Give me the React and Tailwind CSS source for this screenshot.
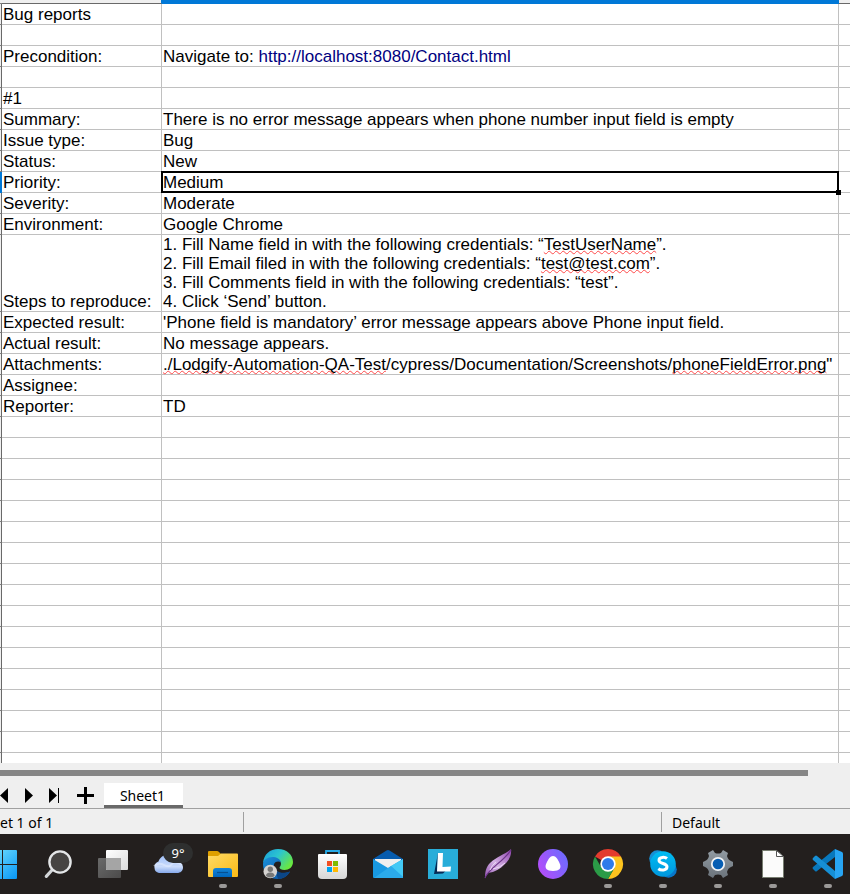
import React from "react";

const wavy =
  "underline decoration-wavy decoration-1 decoration-[#ff4a4a] underline-offset-0 [text-decoration-skip-ink:none]";

function Typo({ children }) {
  return <span className={wavy}>{children}</span>;
}

const rows = [
  ["Bug reports", ""],
  ["", ""],
  [
    "Precondition:",
    <>
      Navigate to:{" "}
      <a href="http://localhost:8080/Contact.html" className="text-[#000080]">
        http://localhost:8080/Contact.html
      </a>
    </>,
  ],
  ["", ""],
  ["#1", ""],
  ["Summary:", "There is no error message appears when phone number input field is empty"],
  ["Issue type:", "Bug"],
  ["Status:", "New"],
  ["Priority:", "Medium"],
  ["Severity:", "Moderate"],
  ["Environment:", "Google Chrome"],
  [
    "Steps to reproduce:",
    <>
      1. Fill Name field in with the following credentials: “<Typo>TestUserName</Typo>”.
      <br />
      2. Fill Email filed in with the following credentials: “<Typo>test@test.com</Typo>”.
      <br />
      3. Fill Comments field in with the following credentials: “test”.
      <br />
      4. Click ‘Send’ button.
    </>,
  ],
  ["Expected result:", "'Phone field is mandatory’ error message appears above Phone input field."],
  ["Actual result:", "No message appears."],
  [
    "Attachments:",
    <>
      <Typo>./Lodgify-Automation-QA-Test</Typo>/cypress/Documentation/Screenshots/
      <Typo>phoneFieldError.png</Typo>"
    </>,
  ],
  ["Assignee:", ""],
  ["Reporter:", "TD"],
  ...Array.from({ length: 17 }, () => ["", ""]),
];

const SELECTED = 8;
const cell = "h-[21px] border-r border-b border-[#c0c0c0] px-px py-0 align-bottom whitespace-nowrap";

function Sheet() {
  return (
    <table className="w-full table-fixed border-separate border-spacing-0 text-[17px] leading-[19px] text-black">
      <colgroup>
        <col className="w-[2px]" />
        <col className="w-[160px]" />
        <col className="w-[677px]" />
        <col />
      </colgroup>
      <thead>
        <tr className="h-1">
          <th className="border-b border-[#808080] bg-[#efefef] p-0" />
          <th className="border-r border-b border-r-[#0078d7] border-b-[#696969] bg-[#efefef] p-0" />
          <th className="bg-[#0078d7] p-0" />
          <th className="border-b border-[#696969] bg-[#efefef] p-0" />
        </tr>
      </thead>
      <tbody>
        {rows.map(([label, value], i) => (
          <tr key={i}>
            <th
              className={
                i === SELECTED
                  ? "bg-[#0078d7] p-0"
                  : "border-r border-b border-r-[#696969] border-b-[#808080] bg-[#efefef] p-0"
              }
            />
            <td className={cell}>{label}</td>
            <td className={i === SELECTED ? cell + " relative" : cell}>
              {value}
              {i === SELECTED && (
                <span className="absolute -inset-px border-2 border-black">
                  <span className="absolute -right-1 -bottom-1 size-[5px] bg-black" />
                </span>
              )}
            </td>
            <td className="border-b border-[#c0c0c0] p-0" />
          </tr>
        ))}
      </tbody>
    </table>
  );
}

function SheetTabs() {
  return (
    <div className="flex h-[33px] items-end border-b border-[#a0a0a0]">
      <div className="flex h-[26px] w-[104px] shrink-0 items-center">
        <button aria-label="Previous sheet" className="w-[25px]">
          <svg width="9" height="16" viewBox="0 0 9 16"><path d="M8 1v15L0 8.500z" /></svg>
        </button>
        <button aria-label="Next sheet" className="w-6">
          <svg width="9" height="16" viewBox="0 0 9 16"><path d="M0 1v15l8-7.500z" /></svg>
        </button>
        <button aria-label="Last sheet" className="w-7">
          <svg width="11" height="16" viewBox="0 0 11 16"><path d="M0 1v15l8-7.500zM9 1h1v15H9z" /></svg>
        </button>
        <button aria-label="Add sheet" className="w-[18px]">
          <svg width="18" height="18" viewBox="0 0 18 18"><path d="M7 1h3v7h7v3h-7v7H7v-7H0V8h7z" /></svg>
        </button>
      </div>
      <button className="h-[25px] w-[79px] border-b-[3px] border-[#696969] bg-white pt-1 pr-[2px] text-[14px] leading-[18px]">
        Sheet1
      </button>
    </div>
  );
}

function StatusBar() {
  return (
    <div className="flex h-[25px] items-center text-[14px]">
      <div className="w-[243px] shrink-0 pt-px">et 1 of 1</div>
      <div className="h-5 flex-1 border-x border-[#a0a0a0]" />
      <div className="w-[188px] shrink-0 pt-px pl-[10px]">Default</div>
    </div>
  );
}

function Icon({ children }) {
  return (
    <svg width="30" height="30" viewBox="0 0 30 30" className="block overflow-visible" aria-hidden="true">
      {children}
    </svg>
  );
}

const apps = [
  {
    name: "Start",
    icon: (
      <Icon>
        <defs>
          <linearGradient id="win" gradientUnits="userSpaceOnUse" x1="0" y1="1" x2="29" y2="30">
            <stop stopColor="#7ce6ff" /><stop offset="1" stopColor="#0796f5" />
          </linearGradient>
        </defs>
        <path fill="url(#win)" d="M0 2q0-1 1-1h13v14H0zM15 1h13q1 0 1 1v13H15zM0 16h14v14H1q-1 0-1-1zM15 16h14v13q0 1-1 1H15z" />
      </Icon>
    ),
  },
  {
    name: "Search",
    icon: (
      <Icon>
        <path d="M9.500 20.500 3.300 27.300" stroke="#d2d5d8" strokeWidth="3.200" strokeLinecap="round" />
        <circle cx="17" cy="13" r="10.600" fill="#464443" stroke="#e4e6e8" strokeWidth="2.400" />
      </Icon>
    ),
  },
  {
    name: "Task view",
    icon: (
      <Icon>
        <defs>
          <linearGradient id="tv" x1="0" y1="0" x2="1" y2="1"><stop stopColor="#fff" /><stop offset="1" stopColor="#dcdcdc" /></linearGradient>
          <linearGradient id="tg" x1="0" y1="0" x2="1" y2="1"><stop stopColor="#6a6a6a" /><stop offset="1" stopColor="#4b4a4a" /></linearGradient>
        </defs>
        <rect y="9" width="23" height="20" rx="1" fill="url(#tg)" />
        <rect x="8" y="1" width="22" height="20" rx="1" fill="url(#tv)" />
        <path d="M8 9h15v12H9q-1 0-1-1z" fill="#a5a5a5" />
      </Icon>
    ),
  },
  {
    name: "Weather",
    badge: "9°",
    icon: (
      <Icon>
        <defs>
          <linearGradient id="cl" x1="0" y1="0" x2="0" y2="1"><stop stopColor="#9fc0fb" /><stop offset=".65" stopColor="#cbdcfb" /><stop offset="1" stopColor="#86a9eb" /></linearGradient>
        </defs>
        <path d="M6 24a6 6 0 0 1-.5-11.500C7 8.500 10 6 14 6c5 0 8 3 9 6.500 4 0 7 2.500 7 6 0 3.300-2.500 5.500-6 5.500z" fill="url(#cl)" />
        <path d="M1 17q5-4 10-1t8-1 10 1" fill="none" stroke="#e3edff" strokeWidth="2" opacity=".55" />
      </Icon>
    ),
  },
  {
    name: "File Explorer",
    open: true,
    icon: (
      <Icon>
        <defs>
          <linearGradient id="fo" x1="0" y1="0" x2="1" y2="1"><stop stopColor="#ffdb67" /><stop offset="1" stopColor="#fbb915" /></linearGradient>
          <linearGradient id="fb" x1="0" y1="0" x2="0" y2="1"><stop stopColor="#1585d8" /><stop offset="1" stopColor="#0066bd" /></linearGradient>
        </defs>
        <path d="M0 3q0-1 1-1h8q1 0 2 1l2 2v6H0z" fill="#dfa000" />
        <path d="M0 7h10l3-2.500h16q1 0 1 1V27q0 1-1 1H1q-1 0-1-1z" fill="url(#fo)" />
        <path d="M5 28v-6q0-3 3-3h13q3 0 3 3v6z" fill="url(#fb)" />
        <path d="M9 23.500h11" stroke="#064f91" strokeWidth="1.200" />
      </Icon>
    ),
  },
  {
    name: "Microsoft Edge",
    open: true,
    icon: (
      <Icon>
        <defs>
          <linearGradient id="e1" x1="0" y1="0" x2="1" y2=".6"><stop stopColor="#189bdd" /><stop offset=".5" stopColor="#2cc5cf" /><stop offset="1" stopColor="#69e841" /></linearGradient>
          <linearGradient id="e2" x1="0" y1="0" x2="1" y2="1"><stop stopColor="#1a91dc" /><stop offset="1" stopColor="#0b4f9f" /></linearGradient>
        </defs>
        <path d="M0 14C1 5 7 0 15 0c9 0 15 6 15 13 0 5-4 8-8.500 8-3 0-5-1-5-2.200 0-1 1.500-1.500 1.500-4 0-3-3-5.800-7.500-5.800C5 9 1 12 0 14z" fill="url(#e1)" />
        <path d="M0 15c0-4 4.500-7 9.500-7 4 0 7.500 2 8.500 5-6-2-8 2-7 6 1.500 5 8 7 16 3.500C25 27 20 30 15 30 6 30 0 24 0 15z" fill="url(#e2)" />
        <path d="M11 17c1 6 8 8.500 16 5.500-3 5-8 7.500-12 7.500z" fill="#0b4687" />
        <circle cx="7.300" cy="22.500" r="6.800" fill="#d6d3d1" />
        <circle cx="7.300" cy="20.200" r="2.700" fill="#777" />
        <path d="M3 27q0-3.500 4.300-3.500t4.300 3.500q-4 3-8.600 0z" fill="#777" />
      </Icon>
    ),
  },
  {
    name: "Microsoft Store",
    icon: (
      <Icon>
        <defs>
          <linearGradient id="st" x1="0" y1="0" x2="0" y2="1"><stop stopColor="#fff" /><stop offset="1" stopColor="#d6d6d6" /></linearGradient>
        </defs>
        <path d="M8 7V2h13v5" fill="none" stroke="#27a9e6" strokeWidth="1.800" />
        <path d="M0 6q0-1 1-1h27q1 0 1 1v20q0 4-4 4H4q-4 0-4-4z" fill="url(#st)" />
        <path d="M9 12h5v5H9z" fill="#f25022" /><path d="M15 12h5v5h-5z" fill="#7fba00" />
        <path d="M9 18h5v5H9z" fill="#00a4ef" /><path d="M15 18h5v5h-5z" fill="#ffb900" />
      </Icon>
    ),
  },
  {
    name: "Mail",
    icon: (
      <Icon>
        <path d="M0 10 13.500 1.500q1.500-1 3 0L30 10v4H0z" fill="#075cae" />
        <path d="M2 10h26v12H2z" fill="#efefef" />
        <path d="M0 10v18q0 1 1 1h28q1 0 1-1V10L15 19z" fill="#1899e2" />
        <path d="M1 29 18 17l12 11v1z" fill="#2baaea" />
        <path d="M18 17l12-7v18z" fill="#43c9f5" />
      </Icon>
    ),
  },
  {
    name: "Lightshot",
    icon: (
      <Icon>
        <path d="M0 0h30v30H0z" fill="#28add9" />
        <path d="M10 4 6 25l9-.5 3-3H9z" fill="#062b56" />
        <path d="M10 4h5l-.5 14 8.500-.5-.5 5L9 22.500z" fill="#fff" />
      </Icon>
    ),
  },
  {
    name: "Feather",
    icon: (
      <Icon>
        <defs>
          <linearGradient id="fe" x1="0" y1="1" x2="1" y2="0"><stop stopColor="#9050b0" /><stop offset=".45" stopColor="#d5b3e4" /><stop offset="1" stopColor="#8d41ad" /></linearGradient>
        </defs>
        <path d="M28 0C23 5 14 7 7 14c-4 4-5 9-5 15l3-5c7-1 12-4 17-9 3-3 7-8 6-15z" fill="url(#fe)" />
        <path d="M2 29C5 20 20 13 28 1" fill="none" stroke="#6d3589" strokeWidth="1.200" />
        <path d="M7 21q2-5 6-8M10 20q7-1 12-6" fill="none" stroke="#ead8f2" strokeWidth="1" />
      </Icon>
    ),
  },
  {
    name: "Alice",
    icon: (
      <Icon>
        <defs>
          <linearGradient id="al" x1="0" y1=".7" x2="1" y2=".2"><stop stopColor="#b54dfa" /><stop offset="1" stopColor="#6a6cff" /></linearGradient>
        </defs>
        <circle cx="15" cy="15" r="15" fill="url(#al)" />
        <path d="M15 7c3 0 4.500 3 6.500 7 2.500 5 0 8-6.500 8s-9-3-6.500-8C10.500 10 12 7 15 7z" fill="#fff" />
      </Icon>
    ),
  },
  {
    name: "Google Chrome",
    open: true,
    icon: (
      <Icon>
        <path d="M15 15 2 7.500A15 15 0 0 1 28 7.500z" fill="#e33b2e" />
        <path d="M15 7.500h13A15 15 0 0 1 15 30l6.500-11.250z" fill="#fcc31e" />
        <path d="M21.500 18.750 15 30A15 15 0 0 1 2 7.500l6.500 11.250z" fill="#2b9b47" />
        <circle cx="15" cy="15" r="7.700" fill="#fff" />
        <circle cx="15" cy="15" r="6" fill="#2f7bea" />
      </Icon>
    ),
  },
  {
    name: "Skype",
    open: true,
    icon: (
      <Icon>
        <defs>
          <linearGradient id="sk" x1="0" y1="0" x2="0" y2="1"><stop stopColor="#00bdf3" /><stop offset="1" stopColor="#0096dc" /></linearGradient>
        </defs>
        <circle cx="9.500" cy="9.500" r="8.300" fill="#178fd5" />
        <circle cx="20.500" cy="20.500" r="8.300" fill="#0877c9" />
        <circle cx="15" cy="15" r="12.800" fill="url(#sk)" />
        <path d="M19 9.500c-2-1.700-8-1.800-8 1.700 0 4.200 8 2.400 8 6.600 0 3.800-6 4-8.700 2" fill="none" stroke="#fff" strokeWidth="3" />
      </Icon>
    ),
  },
  {
    name: "Settings",
    open: true,
    icon: (
      <Icon>
        <defs>
          <linearGradient id="ge" x1="0" y1="0" x2="0" y2="1"><stop stopColor="#929ba3" /><stop offset="1" stopColor="#6b737b" /></linearGradient>
        </defs>
        <path d="M10 1l2 3q3 1 6 0l2-3 5 3-1 3q1 4 4 5l2 1v4l-2 1q-3 1-4 5l1 3-5 3-2-3q-3-1-6 0l-2 3-5-3 1-3q-1-4-4-5l-2-1v-4l2-1q3-1 4-5L5 4z" fill="url(#ge)" />
        <circle cx="15" cy="15" r="6.200" fill="#075eb3" stroke="#f0f2f4" strokeWidth="1.800" />
      </Icon>
    ),
  },
  {
    name: "LibreOffice",
    open: true,
    icon: (
      <Icon>
        <path d="M4.500 1.500h14l7 6v21h-21z" fill="#fbfbfb" stroke="#777d70" />
        <path d="M18.500 1.500v6h7z" fill="#fff" stroke="#555" />
      </Icon>
    ),
  },
  {
    name: "Visual Studio Code",
    open: true,
    icon: (
      <Icon>
        <path d="M22 0v8L4 22q-1 1-2 0l-2-2q-1-1 0-2z" fill="#0878bd" />
        <path d="M22 30v-8L4 7q-1-1-2 0L0 9q-1 1 0 2z" fill="#168fd5" />
        <path d="m22 0 7 3q1 .5 1 2v20q0 1.500-1 2l-7 3z" fill="#28a5f3" />
      </Icon>
    ),
  },
];

function Taskbar() {
  return (
    <nav aria-label="Taskbar" className="h-[60px] shrink-0 overflow-hidden bg-[#231f1e]">
      <div className="-ml-3 flex gap-[25px] pt-[15px]">
        {apps.map((app) => (
          <button key={app.name} aria-label={app.name} className="relative flex w-[30px] shrink-0 flex-col items-center gap-[5px]">
            {app.icon}
            {app.open && <span className="h-1 w-2 rounded-full bg-[#9b9998]" />}
            {app.badge && (
              <span className="absolute -top-[6px] left-[10px] h-5 w-[30px] rounded-full bg-[#2e2f2f] text-center text-[13px] leading-5 text-white">
                {app.badge}
              </span>
            )}
          </button>
        ))}
      </div>
    </nav>
  );
}

export default function App() {
  return (
    <div className="flex h-screen flex-col overflow-hidden bg-[#efefef] font-['Noto_Sans',sans-serif] text-black">
      <main className="min-h-0 flex-1 overflow-hidden bg-white font-['Liberation_Sans',Arial,sans-serif]">
        <Sheet />
      </main>
      <footer className="shrink-0">
        <div className="pt-[7px] pr-[42px]">
          <div className="h-[6px] bg-[#868686]" />
        </div>
        <SheetTabs />
        <StatusBar />
      </footer>
      <Taskbar />
    </div>
  );
}
